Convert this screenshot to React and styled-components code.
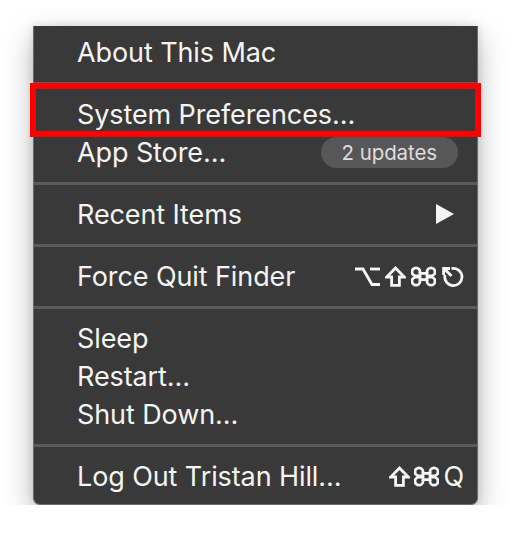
import React from 'react';
import styled, { createGlobalStyle } from 'styled-components';

const GlobalStyle = createGlobalStyle`
  html, body {
    margin: 0;
    padding: 0;
    background: #ffffff;
  }
  body {
    font-family: Inter, "Liberation Sans", sans-serif;
  }
`;

const Page = styled.div`
  padding: 26px 0 0 33px;
`;

const Menu = styled.div`
  width: 445px;
  box-sizing: border-box;
  padding: 7px 0 9px;
  background: #393939;
  border: 1px solid #6a6a6a;
  border-top: none;
  border-radius: 0 0 7px 7px;
  box-shadow: 0 12px 30px rgba(0, 0, 0, 0.28), 0 0 10px rgba(0, 0, 0, 0.12);
  display: flex;
  flex-direction: column;
  color: #f4f4f4;
`;

const Item = styled.div`
  position: relative;
  height: 38px;
  display: flex;
  align-items: center;
  justify-content: space-between;
  padding: 0 13px 0 43px;
  font-size: 27px;
  letter-spacing: -0.1px;

  ${(p) =>
    p.$marked &&
    `
    &::after {
      content: '';
      position: absolute;
      top: -12px;
      bottom: -4px;
      left: -4px;
      right: -4px;
      border: 6px solid #ff0000;
      pointer-events: none;
    }
  `}
`;

const Separator = styled.div`
  height: 3px;
  margin: 11px 0 10px;
  background: #5b5b5b;
`;

const Badge = styled.span`
  margin-right: 6px;
  height: 31px;
  padding: 0 21px;
  border-radius: 16px;
  background: #575757;
  color: #dedede;
  font-size: 20.5px;
  display: flex;
  align-items: center;
`;

const Shortcut = styled.span`
  display: flex;
  flex-shrink: 0;
  align-items: center;
  gap: ${(p) => p.$gap || 5}px;
  font-size: 27px;
`;

const Arrow = styled.svg`
  width: 18px;
  height: 20px;
  margin-right: 10px;
`;

const Glyph = styled.svg`
  width: ${(p) => p.$w}px;
  height: 21px;
  flex-shrink: 0;
  display: block;
  fill: none;
  stroke: #f6f6f6;
  stroke-width: 2.8;
`;

const OptionKey = () => (
  <Glyph $w={25} viewBox="0 0 25 21">
    <path d="M0 3 H8 L17 18.5 H25" />
    <path d="M15 3 H25" />
  </Glyph>
);

const ShiftKey = () => (
  <Glyph $w={21} viewBox="0 0 21 21" strokeLinejoin="miter">
    <path d="M10.5 2 L19.3 11 H14.4 V19.4 H6.6 V11 H1.7 Z" />
  </Glyph>
);

const CommandKey = () => (
  <Glyph $w={25} viewBox="0 0 25 21">
    <path d="M9 7.3 H16 V13.7 H9 Z" />
    <path d="M9 7.3 V5.8 A4 4 0 1 0 5 9.8 H9" />
    <path d="M16 7.3 V5.8 A4 4 0 1 1 20 9.8 H16" />
    <path d="M9 13.7 V15.2 A4 4 0 1 1 5 11.2 H9" />
    <path d="M16 13.7 V15.2 A4 4 0 1 0 20 11.2 H16" />
  </Glyph>
);

const EscapeKey = () => (
  <Glyph $w={23} viewBox="0 0 23 21">
    <path d="M10.5 2.6 A8.6 8.6 0 1 1 4 9" />
    <path d="M3 2.5 L10.5 10" />
    <path d="M2.6 9 V2.5 H9" />
  </Glyph>
);

export default function App() {
  return (
    <>
      <GlobalStyle />
      <Page>
        <Menu>
          <Item>About This Mac</Item>
          <Separator />
          <Item $marked>System Preferences…</Item>
          <Item>
            App Store…
            <Badge>2 updates</Badge>
          </Item>
          <Separator />
          <Item>
            Recent Items
            <Arrow viewBox="0 0 18 20">
              <path d="M0 0 L18 10 L0 20 Z" fill="#f4f4f4" />
            </Arrow>
          </Item>
          <Separator />
          <Item>
            Force Quit Finder
            <Shortcut $gap={5}>
              <OptionKey />
              <ShiftKey />
              <CommandKey />
              <EscapeKey />
            </Shortcut>
          </Item>
          <Separator />
          <Item>Sleep</Item>
          <Item>Restart…</Item>
          <Item>Shut Down…</Item>
          <Separator />
          <Item>
            Log Out Tristan Hill…
            <Shortcut $gap={4}>
              <ShiftKey />
              <CommandKey />
              <span>Q</span>
            </Shortcut>
          </Item>
        </Menu>
      </Page>
    </>
  );
}
